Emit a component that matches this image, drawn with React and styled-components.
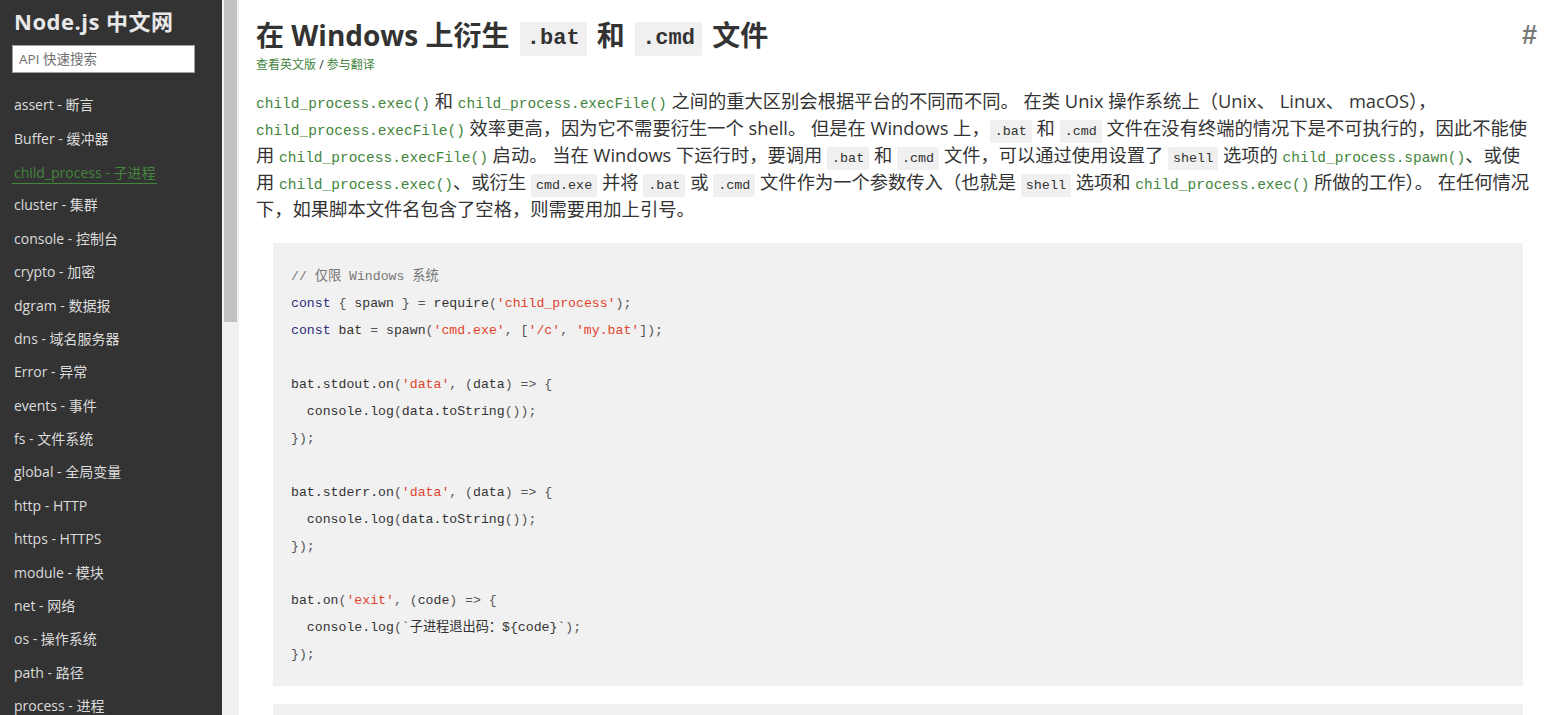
import styled, { createGlobalStyle } from "styled-components"

const GlobalStyle = createGlobalStyle`
	html, body {
		margin: 0;
		padding: 0;
		height: 715px;
		overflow: hidden;
		background: #fff;
	}
	body {
		font-family: "Open Sans", "Noto Sans CJK SC", sans-serif;
		color: #333;
	}
	* {
		box-sizing: border-box;
	}
`

const Page = styled.div`
	display: flex;
	height: 715px;
	overflow: hidden;
`
const Sidebar = styled.aside`
	width: 222px;
	flex-shrink: 0;
	background-color: #333;
	padding: 0 12px;
	overflow: hidden;
`
const Logo = styled.h1`
	margin: 0;
	padding: 6px 0 0 2px;
	height: 45px;
	font-family: "Open Sans", "Noto Sans CJK SC", sans-serif;
	font-size: 22px;
	font-weight: bold;
	letter-spacing: 0.5px;
	line-height: 30px;
	color: #e8e8e8;
	white-space: nowrap;
`
const Search = styled.input`
	display: block;
	width: 183px;
	height: 28px;
	padding: 0 6px;
	border: 1px solid #a0a0a0;
	background-color: white;
	font-family: "Open Sans", "Noto Sans CJK SC", sans-serif;
	font-size: 13.5px;
	color: #333;
	&::placeholder {
		color: #6f6f6f;
	}
	&:focus {
		outline: none;
	}
`
const NavList = styled.ul`
	list-style: none;
	margin: 16px 0 0;
	padding: 0;
`
const NavItem = styled.li`
	height: 33.4px;
	display: flex;
	align-items: center;
`
const NavLink = styled.a`
	display: inline-block;
	padding: 0 2px;
	line-height: 20px;
	font-family: "Open Sans", "Noto Sans CJK SC", sans-serif;
	font-size: 14px;
	text-decoration: none;
	white-space: nowrap;
	color: ${(props) => (props.$active ? "#43853d" : "#dcdcdc")};
	border-bottom: 1px solid ${(props) => (props.$active ? "#43853d" : "transparent")};
	margin-top: ${(props) => (props.$active ? "2px" : "0")};
`
const ScrollTrack = styled.div`
	width: 17px;
	flex-shrink: 0;
	background-color: #f1f1f1;
	padding: 0 2px;
`
const ScrollThumb = styled.div`
	height: 322px;
	background-color: #c1c1c1;
`
const Main = styled.main`
	flex: 1;
	min-width: 0;
	padding: 0 15px 0 17px;
	overflow: hidden;
`
const TitleRow = styled.div`
	display: flex;
	justify-content: space-between;
	align-items: center;
	margin-top: 15px;
	height: 40px;
`
const Title = styled.h1`
	margin: 0;
	font-size: 28px;
	font-weight: bold;
	line-height: 40px;
	color: #333;
	white-space: nowrap;
`
const TitleCode = styled.code`
	display: inline-block;
	font-family: "Liberation Mono", monospace;
	font-size: 22px;
	font-weight: bold;
	line-height: 34px;
	padding: 0 7px;
	margin: 0 3px;
	border-radius: 2px;
	background-color: #f0f0f0;
	vertical-align: 2px;
`
const Anchor = styled.a`
	font-family: "Liberation Sans", sans-serif;
	font-size: 27px;
	font-weight: bold;
	color: #777;
	text-decoration: none;
	margin-right: 3px;
`
const SubLinks = styled.div`
	font-size: 12px;
	line-height: 20px;
	color: #333;
	a {
		color: #43853d;
		text-decoration: none;
	}
`
const Paragraph = styled.p`
	margin: 12px 0 0;
	padding-right: 6px;
	font-size: 18.3px;
	line-height: 27px;
	color: #333;
`
const CodeLink = styled.a`
	font-family: "Liberation Mono", monospace;
	font-size: 14.5px;
	line-height: 1;
	color: #43853d;
	text-decoration: none;
`
const Code = styled.code`
	font-family: "Liberation Mono", monospace;
	font-size: 13.4px;
	line-height: 1;
	padding: 4px 5px;
	border-radius: 2px;
	background-color: #f0f0f0;
	color: #333;
`
const Pre = styled.pre`
	margin: 21px 17px 0;
	padding: 20px 18px 18px;
	background-color: #f1f1f1;
	font-family: "Liberation Mono", "Noto Sans CJK SC", monospace;
	font-size: 13.2px;
	line-height: 27px;
	color: #333;
	white-space: pre;
	& + & {
		margin-top: 18px;
	}
`
const Token = styled.span`
	color: ${(props) =>
		({
			kw: "#2c2c7a",
			str: "#e0442c",
			com: "#777",
			pun: "#555",
		})[props.$t] || "#333"};
`

const modules = [
	"assert - 断言",
	"Buffer - 缓冲器",
	"child_process - 子进程",
	"cluster - 集群",
	"console - 控制台",
	"crypto - 加密",
	"dgram - 数据报",
	"dns - 域名服务器",
	"Error - 异常",
	"events - 事件",
	"fs - 文件系统",
	"global - 全局变量",
	"http - HTTP",
	"https - HTTPS",
	"module - 模块",
	"net - 网络",
	"os - 操作系统",
	"path - 路径",
	"process - 进程",
	"querystring - 查询字符串",
]

// each line is a list of [type, text]
const codeLines = [
	[["com", "// 仅限 Windows 系统"]],
	[["kw", "const"], ["", " "], ["pun", "{"], ["", " spawn "], ["pun", "}"], ["", " "], ["pun", "="], ["", " require"], ["pun", "("], ["str", "'child_process'"], ["pun", ");"]],
	[["kw", "const"], ["", " bat "], ["pun", "="], ["", " spawn"], ["pun", "("], ["str", "'cmd.exe'"], ["pun", ", ["], ["str", "'/c'"], ["pun", ", "], ["str", "'my.bat'"], ["pun", "]);"]],
	[],
	[["", "bat.stdout.on"], ["pun", "("], ["str", "'data'"], ["pun", ", ("], ["", "data"], ["pun", ") => {"]],
	[["", "  console.log"], ["pun", "("], ["", "data.toString"], ["pun", "());"]],
	[["pun", "});"]],
	[],
	[["", "bat.stderr.on"], ["pun", "("], ["str", "'data'"], ["pun", ", ("], ["", "data"], ["pun", ") => {"]],
	[["", "  console.log"], ["pun", "("], ["", "data.toString"], ["pun", "());"]],
	[["pun", "});"]],
	[],
	[["", "bat.on"], ["pun", "("], ["str", "'exit'"], ["pun", ", ("], ["", "code"], ["pun", ") => {"]],
	[["", "  console.log"], ["pun", "("], ["", "`子进程退出码：${code}`"], ["pun", ");"]],
	[["pun", "});"]],
]

const App = () => {
	return (
		<>
			<GlobalStyle />
			<Page>
				<Sidebar>
					<Logo>Node.js 中文网</Logo>
					<Search type='text' placeholder='API 快速搜索' />
					<NavList>
						{modules.map((m) => (
							<NavItem key={m}>
								<NavLink href='#' $active={m.startsWith("child_process")}>
									{m}
								</NavLink>
							</NavItem>
						))}
					</NavList>
				</Sidebar>
				<ScrollTrack>
					<ScrollThumb />
				</ScrollTrack>
				<Main>
					<TitleRow>
						<Title>
							在 Windows 上衍生 <TitleCode>.bat</TitleCode> 和 <TitleCode>.cmd</TitleCode> 文件
						</Title>
						<Anchor href='#'>#</Anchor>
					</TitleRow>
					<SubLinks>
						<a href='#'>查看英文版</a> / <a href='#'>参与翻译</a>
					</SubLinks>
					<Paragraph>
						<CodeLink href='#'>child_process.exec()</CodeLink> 和{" "}
						<CodeLink href='#'>child_process.execFile()</CodeLink> 之间的重大区别会根据平台的不同而不同。
						在类 Unix 操作系统上（Unix、 Linux、 macOS），
						<CodeLink href='#'>child_process.execFile()</CodeLink> 效率更高，因为它不需要衍生一个 shell。
						但是在 Windows 上，<Code>.bat</Code> 和 <Code>.cmd</Code>{" "}
						文件在没有终端的情况下是不可执行的，因此不能使用{" "}
						<CodeLink href='#'>child_process.execFile()</CodeLink> 启动。 当在 Windows 下运行时，要调用{" "}
						<Code>.bat</Code> 和 <Code>.cmd</Code> 文件，可以通过使用设置了 <Code>shell</Code> 选项的{" "}
						<CodeLink href='#'>child_process.spawn()</CodeLink>、或使用{" "}
						<CodeLink href='#'>child_process.exec()</CodeLink>、或衍生 <Code>cmd.exe</Code> 并将{" "}
						<Code>.bat</Code> 或 <Code>.cmd</Code> 文件作为一个参数传入（也就是 <Code>shell</Code>{" "}
						选项和 <CodeLink href='#'>child_process.exec()</CodeLink> 所做的工作）。
						在任何情况下，如果脚本文件名包含了空格，则需要用加上引号。
					</Paragraph>
					<Pre>
						{codeLines.map((line, i) => (
							<div key={i}>
								{line.length === 0
									? "\u00a0"
									: line.map(([t, text], j) => (
											<Token key={j} $t={t}>
												{text}
											</Token>
									  ))}
							</div>
						))}
					</Pre>
					<Pre>{"\u00a0"}</Pre>
				</Main>
			</Page>
		</>
	)
}

export default App
